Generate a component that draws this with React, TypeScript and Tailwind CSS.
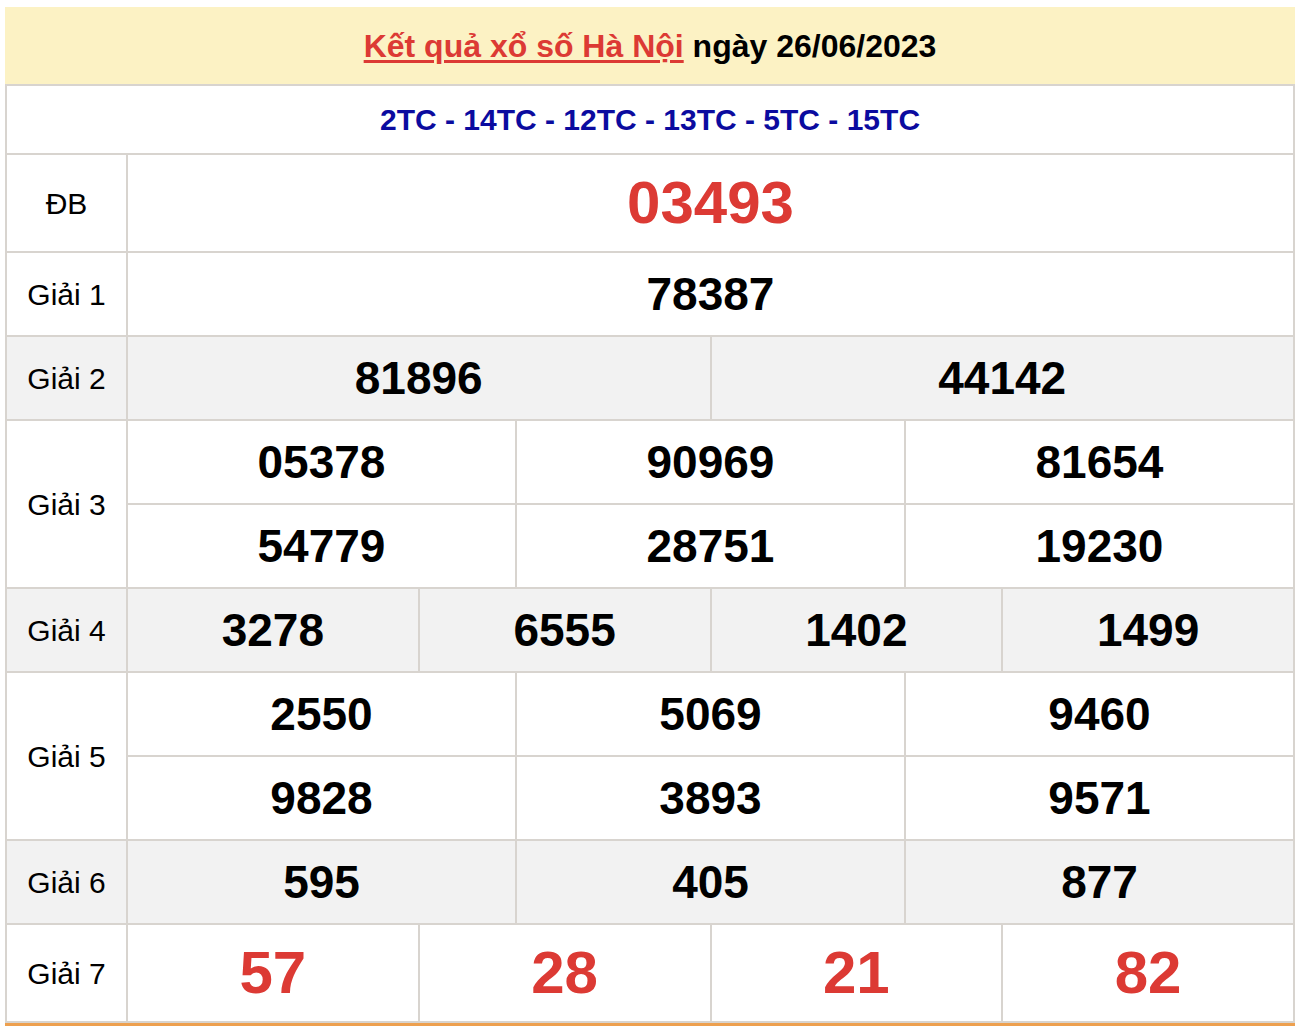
const rows: { label: string; nums: string[][]; red?: boolean; big?: boolean; bg: string }[] = [
  { label: "ĐB", nums: [["03493"]], red: true, big: true, bg: "bg-white" },
  { label: "Giải 1", nums: [["78387"]], bg: "bg-white" },
  { label: "Giải 2", nums: [["81896", "44142"]], bg: "bg-[#f2f2f2]" },
  {
    label: "Giải 3",
    nums: [
      ["05378", "90969", "81654"],
      ["54779", "28751", "19230"],
    ],
    bg: "bg-white",
  },
  { label: "Giải 4", nums: [["3278", "6555", "1402", "1499"]], bg: "bg-[#f2f2f2]" },
  {
    label: "Giải 5",
    nums: [
      ["2550", "5069", "9460"],
      ["9828", "3893", "9571"],
    ],
    bg: "bg-white",
  },
  { label: "Giải 6", nums: [["595", "405", "877"]], bg: "bg-[#f2f2f2]" },
  { label: "Giải 7", nums: [["57", "28", "21", "82"]], red: true, big: true, bg: "bg-white" },
];

const cell = "border-2 border-[#d8d4cf]";

export default function App() {
  return (
    <div className="bg-white min-h-screen pt-[7px] pl-[5px] font-['Liberation_Sans',Arial,sans-serif]">
      <div className="w-[1290px] border-b-4 border-[#eda04f]">
        <div className="h-[77px] bg-[#fcf2c4] flex items-center justify-center text-[32px] font-bold">
          <a href="#" className="text-[#dc3a34] underline underline-offset-[3px] decoration-[3px]">
            Kết quả xổ số Hà Nội
          </a>
          <span className="text-black">&nbsp;ngày 26/06/2023</span>
        </div>
        <table className="w-full table-fixed border-collapse">
          <colgroup>
            <col className="w-[121px]" />
            {Array.from({ length: 12 }).map((_, i) => (
              <col key={i} />
            ))}
          </colgroup>
          <tbody>
            <tr>
              <td colSpan={13} className={`${cell} h-[69px] text-center text-[30px] font-bold text-[#0b0b9f]`}>
                2TC - 14TC - 12TC - 13TC - 5TC - 15TC
              </td>
            </tr>
            {rows.map((row) =>
              row.nums.map((line, li) => (
                <tr key={row.label + li} className={row.bg}>
                  {li === 0 && (
                    <td rowSpan={row.nums.length} className={`${cell} text-center text-[30px] text-black`}>
                      {row.label}
                    </td>
                  )}
                  {line.map((n) => (
                    <td
                      key={n}
                      colSpan={12 / line.length}
                      className={`${cell} text-center font-bold ${row.big ? "h-[98px] text-[60px] text-[#dc3a34]" : "h-[84px] text-[46px] text-black"}`}
                    >
                      {n}
                    </td>
                  ))}
                </tr>
              ))
            )}
          </tbody>
        </table>
      </div>
    </div>
  );
}
